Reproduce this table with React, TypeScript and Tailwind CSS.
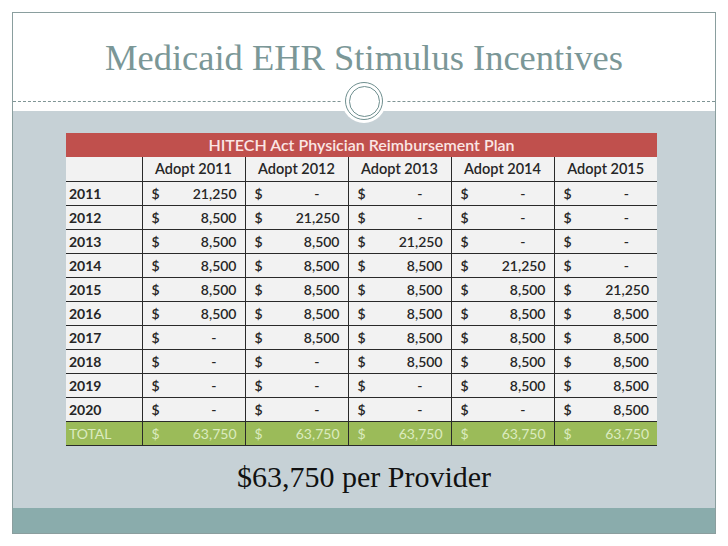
import React from "react";

const cols = ["Adopt 2011", "Adopt 2012", "Adopt 2013", "Adopt 2014", "Adopt 2015"];
const rows: [string, string[]][] = [
  ["2011", ["21,250", "-", "-", "-", "-"]],
  ["2012", ["8,500", "21,250", "-", "-", "-"]],
  ["2013", ["8,500", "8,500", "21,250", "-", "-"]],
  ["2014", ["8,500", "8,500", "8,500", "21,250", "-"]],
  ["2015", ["8,500", "8,500", "8,500", "8,500", "21,250"]],
  ["2016", ["8,500", "8,500", "8,500", "8,500", "8,500"]],
  ["2017", ["-", "8,500", "8,500", "8,500", "8,500"]],
  ["2018", ["-", "-", "8,500", "8,500", "8,500"]],
  ["2019", ["-", "-", "-", "8,500", "8,500"]],
  ["2020", ["-", "-", "-", "-", "8,500"]],
];

function Cell({ v, total }: { v: string; total?: boolean }) {
  const dash = v === "-";
  return (
    <td
      className={
        "h-[24px] w-[103px] border-l-[1.5px] border-[#2a2a2a] p-0 " +
        (total ? "bg-[#9bbb59] text-[#dcebc0] font-normal" : "bg-[#f2f2f2] text-[#262626]")
      }
    >
      <div className="flex items-center justify-between pl-[9px] pr-[8px]">
        <span>$</span>
        <span className={dash ? "pr-[20px]" : ""}>{v}</span>
      </div>
    </td>
  );
}

export default function App() {
  return (
    <div className="w-[728px] h-[546px] bg-white pt-[12px] pl-[12px]">
      <div className="relative w-[704px] h-[522px] border border-[#8a9e9e] flex flex-col">
        <div className="h-[89px] border-b border-dashed border-[#7f9595] flex items-start justify-center">
          <div
            className="mt-[24px] text-[#7b9797] text-[36.5px] leading-[42px]"
            style={{ fontFamily: "Georgia, 'Liberation Serif', serif" }}
          >
            Medicaid EHR Stimulus Incentives
          </div>
        </div>
        <div className="h-[9px] bg-white" />
        <div className="h-[397px] bg-[#c6d1d6] flex flex-col">
          <div className="ml-[53px] mt-[22px]">
            <table
              className="border-collapse text-[14px] font-semibold"
              style={{ fontFamily: "Lato, 'Open Sans', sans-serif" }}
            >
              <thead>
                <tr>
                  <th
                    colSpan={6}
                    className="h-[23px] bg-[#c0504d] text-[#fbe6e4] font-semibold text-[16px] p-0 text-center"
                  >
                    HITECH Act Physician Reimbursement Plan
                  </th>
                </tr>
                <tr className="border-b-[1.5px] border-[#2a2a2a]">
                  <th className="h-[24px] w-[76px] bg-[#f2f2f2] p-0" />
                  {cols.map((c) => (
                    <th
                      key={c}
                      className="h-[24px] w-[103px] bg-[#f2f2f2] border-l-[1.5px] border-[#2a2a2a] text-[#262626] font-semibold p-0 text-center text-[14.5px]"
                    >
                      {c}
                    </th>
                  ))}
                </tr>
              </thead>
              <tbody>
                {rows.map(([y, vals]) => (
                  <tr key={y} className="border-b-[1.5px] border-[#2a2a2a]">
                    <td className="h-[24px] w-[76px] bg-[#f2f2f2] text-[#262626] font-bold p-0">
                      <span className="pl-[3px]">{y}</span>
                    </td>
                    {vals.map((v, i) => (
                      <Cell key={i} v={v} />
                    ))}
                  </tr>
                ))}
                <tr className="border-b border-[#2a2a2a]">
                  <td className="h-[24px] w-[76px] bg-[#9bbb59] text-[#dcebc0] font-normal p-0">
                    <span className="pl-[3px]">TOTAL</span>
                  </td>
                  {cols.map((c) => (
                    <Cell key={c} v="63,750" total />
                  ))}
                </tr>
              </tbody>
            </table>
          </div>
          <div
            className="mt-[12px] text-center text-[#111] text-[30px] leading-[38px]"
            style={{ fontFamily: "Georgia, 'Liberation Serif', serif" }}
          >
            $63,750 per Provider
          </div>
        </div>
        <div className="flex-1 bg-[#8aacac]" />
        <div className="absolute left-[329px] top-[66px] w-[44px] h-[44px] rounded-full bg-white flex items-center justify-center">
          <div className="w-[38px] h-[38px] rounded-full border-[1.5px] border-[#6f8f8f] flex items-center justify-center">
            <div className="w-[31px] h-[31px] rounded-full border-[1.5px] border-[#6f8f8f]" />
          </div>
        </div>
      </div>
    </div>
  );
}
